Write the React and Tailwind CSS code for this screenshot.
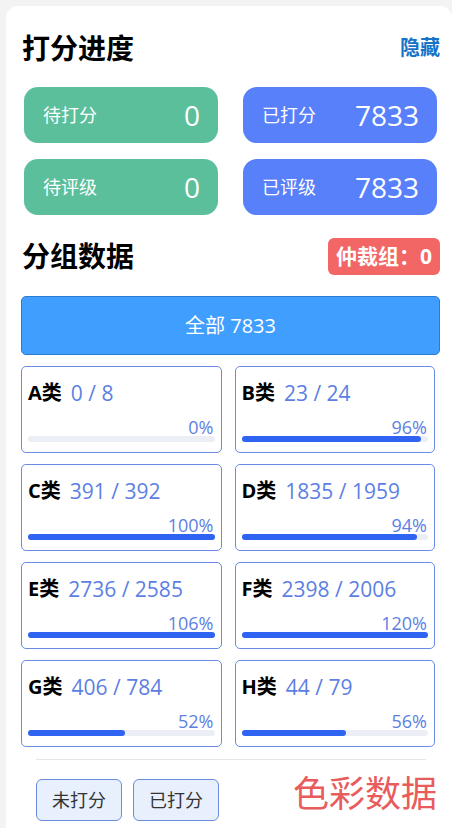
import React from "react";

const groups = [
  { name: "A类", done: 0, total: 8, pct: 0 },
  { name: "B类", done: 23, total: 24, pct: 96 },
  { name: "C类", done: 391, total: 392, pct: 100 },
  { name: "D类", done: 1835, total: 1959, pct: 94 },
  { name: "E类", done: 2736, total: 2585, pct: 106 },
  { name: "F类", done: 2398, total: 2006, pct: 120 },
  { name: "G类", done: 406, total: 784, pct: 52 },
  { name: "H类", done: 44, total: 79, pct: 56 },
];

function Tile({ label, value, color }) {
  return (
    <div className={`flex h-[56px] items-center justify-between rounded-[14px] pl-[19px] pr-[18px] text-white ${color}`}>
      <span className="text-[18px] leading-[24px]">{label}</span>
      <span className="text-[28px] leading-[36px]">{value}</span>
    </div>
  );
}

function GroupCard({ g }) {
  const w = Math.min(g.pct, 100);
  return (
    <div className="h-[87px] rounded-[5px] border border-[#6a8be3] px-[6px] pt-[12px] pb-[9px]">
      <div className="flex items-center text-[20px] leading-[28px]">
        <span className="font-bold text-black">{g.name}</span>
        <span className="ml-[9px] text-[21px] text-[#5d7fe3]">
          {g.done} / {g.total}
        </span>
      </div>
      <div className="mt-[11px] pr-[1px] text-right text-[18px] leading-[18px] text-[#5d7fe3]">{g.pct}%</div>
      <div className="h-[6px] w-full rounded-full bg-[#ebeef5]">
        <div className="h-[6px] rounded-full bg-[#2f63f2]" style={{ width: `${w}%` }} />
      </div>
    </div>
  );
}

export default function App() {
  return (
    <div
      className="min-h-screen bg-[#f3f3f3] pl-[6px] pt-[6px]"
      style={{ fontFamily: '"Open Sans", "Noto Sans CJK SC", sans-serif' }}
    >
      <div className="min-h-[822px] rounded-t-[12px] bg-white pl-[16px] pr-[12px] pt-[25px]">
        <div className="flex items-center justify-between">
          <h1 className="text-[28px] font-bold leading-[34px] text-black">打分进度</h1>
          <span className="text-[20px] font-bold leading-[28px] text-[#1772c9]">隐藏</span>
        </div>

        <div className="mt-[22px] ml-[2px] mr-[3px] grid grid-cols-2 gap-x-[25px] gap-y-[16px]">
          <Tile label="待打分" value="0" color="bg-[#5cbf9b]" />
          <Tile label="已打分" value="7833" color="bg-[#5880fa]" />
          <Tile label="待评级" value="0" color="bg-[#5cbf9b]" />
          <Tile label="已评级" value="7833" color="bg-[#5880fa]" />
        </div>

        <div className="mt-[23px] flex items-center justify-between">
          <h2 className="text-[28px] font-bold leading-[37px] text-black">分组数据</h2>
          <span className="flex h-[37px] items-center rounded-[6px] bg-[#f26666] px-[8px] text-[21px] font-bold text-white">
            仲裁组：0
          </span>
        </div>

        <div className="mt-[21px] -ml-[1px] flex h-[59px] items-center justify-center rounded-[5px] border border-[#2a7cd1] bg-[#409eff] text-[20px] text-white">
          全部 7833
        </div>

        <div className="mt-[11px] -ml-[1px] mr-[5px] grid grid-cols-2 gap-x-[13px] gap-y-[11px]">
          {groups.map((g) => (
            <GroupCard key={g.name} g={g} />
          ))}
        </div>

        <div className="mx-[14px] mt-[12px] h-px bg-[#e6e6e6]" />

        <div className="ml-[14px] mr-[3px] mt-[10px] flex items-start justify-between">
          <div className="mt-[9px] flex gap-[11px]">
            <button className="h-[42px] w-[86px] rounded-[6px] border border-[#6a8be3] bg-[#e7f0fc] text-[18px] text-[#333]">
              未打分
            </button>
            <button className="h-[42px] w-[86px] rounded-[6px] border border-[#6a8be3] bg-[#e7f0fc] text-[18px] text-[#333]">
              已打分
            </button>
          </div>
          <span className="text-[36px] leading-[48px] text-[#e85c5c]">色彩数据</span>
        </div>
      </div>
    </div>
  );
}
